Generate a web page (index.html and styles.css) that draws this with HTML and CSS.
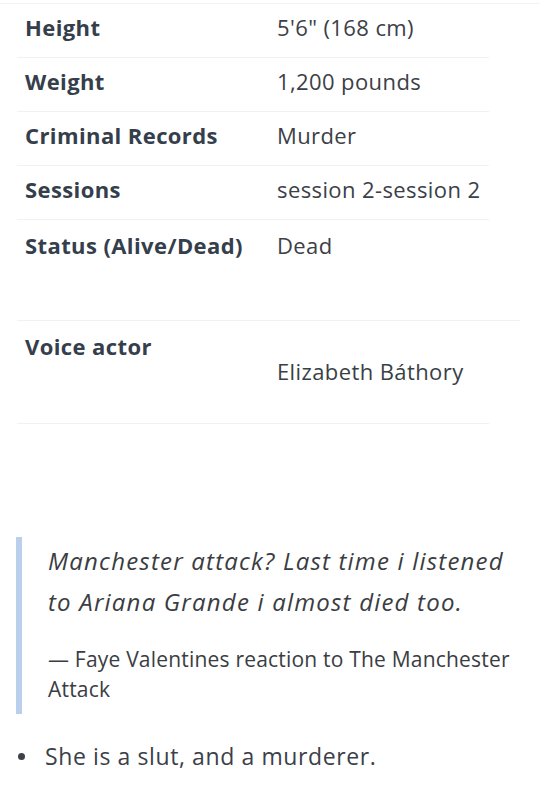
FILE: index.html
```html
<!DOCTYPE html>
<html>
<head>
<meta charset="utf-8">
<link rel="stylesheet" href="styles.css">
</head>
<body>
<div class="topline"></div>
<div class="infobox">
  <div class="row"><div class="label">Height</div><div class="value">5'6" (168 cm)</div></div>
  <div class="row"><div class="label">Weight</div><div class="value">1,200 pounds</div></div>
  <div class="row"><div class="label">Criminal Records</div><div class="value">Murder</div></div>
  <div class="row"><div class="label">Sessions</div><div class="value">session 2-session 2</div></div>
  <div class="row tall"><div class="label">Status (Alive/Dead)</div><div class="value">Dead</div></div>
</div>
<div class="voice">
  <div class="voice-label">Voice actor</div>
  <div class="voice-value">Elizabeth Báthory</div>
</div>
<blockquote class="quote">
  <p class="quote-text">Manchester attack? Last time i listened to Ariana Grande i almost died too.</p>
  <p class="quote-cite">— Faye Valentines reaction to The Manchester Attack</p>
</blockquote>
<ul class="list">
  <li>She is a slut, and a murderer.</li>
</ul>
</body>
</html>
```
FILE: styles.css
```css
html, body {
  margin: 0;
  padding: 0;
  background: #ffffff;
}
body {
  font-family: "Open Sans", Roboto, sans-serif;
  color: #3a3f46;
  width: 540px;
}
.topline {
  height: 1px;
  margin-top: 3px;
  background: #f0f2f5;
}
.infobox {
  margin-left: 17px;
  width: 472px;
}
.row {
  display: flex;
  border-bottom: 1px solid #eef1f5;
  padding: 11px 0 18px;
  line-height: 24px;
}
.row.tall {
  padding-top: 13px;
  padding-bottom: 63px;
  margin-right: -31px;
}
.label {
  width: 252px;
  flex: none;
  padding-left: 8px;
  font-weight: 700;
  font-size: 22px;
  letter-spacing: 0.4px;
  color: #353e4b;
}
.value {
  font-size: 22px;
  letter-spacing: 0.4px;
  color: #3c4047;
}
.voice {
  margin-left: 17px;
  width: 472px;
  border-bottom: 1px solid #eef1f5;
  padding: 13px 0 39px;
}
.voice-label {
  padding-left: 8px;
  font-weight: 700;
  font-size: 22px;
  letter-spacing: 0.4px;
  line-height: 24px;
  color: #353e4b;
}
.voice-value {
  padding-left: 260px;
  font-size: 22px;
  letter-spacing: 0.4px;
  line-height: 26px;
}
.quote {
  margin: 113px 0 0 16px;
  border-left: 6px solid #b9cfec;
  padding: 3px 18px 10px 26px;
}
.quote-text {
  margin: 0;
  font-style: italic;
  font-size: 24px;
  letter-spacing: 1.2px;
  line-height: 41px;
  color: #3a3d42;
}
.quote-cite {
  margin: 22px 0 0;
  font-size: 21px;
  letter-spacing: 0.2px;
  line-height: 30px;
  color: #3a3d42;
}
.list {
  margin: 27px 0 0;
  padding-left: 18px;
  list-style: none;
  font-size: 23px;
  letter-spacing: 0.6px;
  line-height: 30px;
  color: #3b4049;
}
.list li {
  display: flex;
  align-items: center;
}
.list li::before {
  content: "";
  flex: none;
  width: 7px;
  height: 7px;
  border-radius: 50%;
  background: #3b4049;
  margin-right: 20px;
}
```
